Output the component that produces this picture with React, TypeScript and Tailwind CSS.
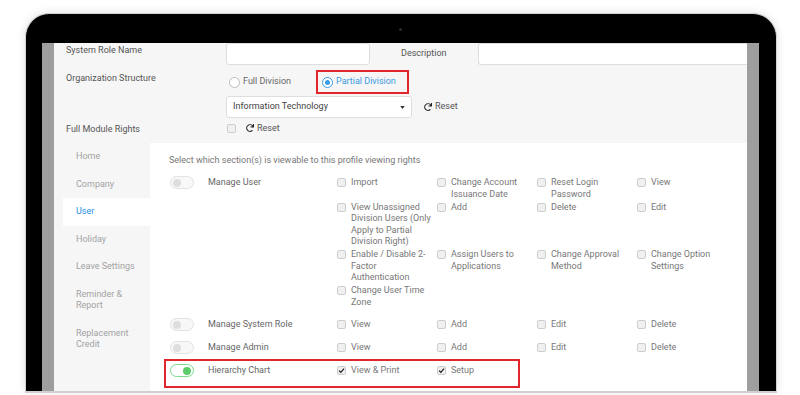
import { FaRedo } from 'react-icons/fa';

type Perm = { label: string; checked?: boolean };

interface ModuleRow {
    name: string;
    on?: boolean;
    perms: Perm[][];
    highlight?: boolean;
}

const modules: ModuleRow[] = [
    {
        name: 'Manage User',
        perms: [
            [{ label: 'Import' }, { label: 'Change Account Issuance Date' }, { label: 'Reset Login Password' }, { label: 'View' }],
            [{ label: 'View Unassigned Division Users (Only Apply to Partial Division Right)' }, { label: 'Add' }, { label: 'Delete' }, { label: 'Edit' }],
            [{ label: 'Enable / Disable 2-Factor Authentication' }, { label: 'Assign Users to Applications' }, { label: 'Change Approval Method' }, { label: 'Change Option Settings' }],
            [{ label: 'Change User Time Zone' }],
        ],
    },
    {
        name: 'Manage System Role',
        perms: [[{ label: 'View' }, { label: 'Add' }, { label: 'Edit' }, { label: 'Delete' }]],
    },
    {
        name: 'Manage Admin',
        perms: [[{ label: 'View' }, { label: 'Add' }, { label: 'Edit' }, { label: 'Delete' }]],
    },
    {
        name: 'Hierarchy Chart',
        on: true,
        highlight: true,
        perms: [[{ label: 'View & Print', checked: true }, { label: 'Setup', checked: true }]],
    },
];

const menu = [
    { label: 'Home' },
    { label: 'Company' },
    { label: 'User', active: true },
    { label: 'Holiday' },
    { label: 'Leave Settings' },
    { label: 'Reminder & Report' },
    { label: 'Replacement Credit' },
];

function Checkbox({ checked }: { checked?: boolean }) {
    return (
        <span className="mt-[1px] flex h-[9px] w-[9px] shrink-0 items-center justify-center rounded-[2px] border border-[#cdcdcd] bg-[#f0f0f0]">
            {checked && (
                <svg viewBox="0 0 10 10" className="h-[7px] w-[7px]">
                    <path d="M1.5 5.2 L4 7.6 L8.6 2.2" fill="none" stroke="#222" strokeWidth={1.8} />
                </svg>
            )}
        </span>
    );
}

function Toggle({ on }: { on?: boolean }) {
    return (
        <span
            className={
                on
                    ? 'flex h-[13px] w-[24px] items-center justify-end rounded-full border border-[#7fd98c] bg-white px-[2px]'
                    : 'flex h-[13px] w-[24px] items-center justify-start rounded-full border border-[#e2e2e2] bg-[#f8f8f8] px-[2px]'
            }
        >
            <span className={on ? 'h-[8px] w-[8px] rounded-full bg-[#5ccb6c]' : 'h-[8px] w-[8px] rounded-full bg-[#dedede]'} />
        </span>
    );
}

function ResetLink() {
    return (
        <span className="flex items-center gap-[3px] text-[9px] leading-[11.5px] text-[#555]">
            <FaRedo className="h-[8px] w-[8px] text-[#222]" />
            Reset
        </span>
    );
}

export default function App() {
    return (
        <div className="h-[395px] w-[800px] overflow-hidden bg-white pl-[25px] pt-[13px] font-['Roboto',sans-serif]">
            <div className="flex h-[378px] w-[752px] flex-col rounded-t-[24px] border border-b-0 border-[#d2d2d2] bg-black pl-[16px] pr-[17px] shadow-[0_0_10px_rgba(0,0,0,0.12)]">
                {/* camera */}
                <div className="flex h-[29px] shrink-0 items-center justify-center">
                    <span className="mt-[1px] h-[3px] w-[3px] rounded-full bg-[#2c2c2c]" />
                </div>

                <div className="flex min-h-0 flex-1">
                    <div className="w-[12px] bg-[#9e9e9e]" />

                    <div className="flex w-[693px] flex-col bg-[#f6f6f6]">
                        {/* top form */}
                        <div className="h-[100px] shrink-0 text-[9px] leading-[11.5px] text-[#555]">
                            <div className="flex h-[22px]">
                                <div className="w-[172px] pl-[12px] pt-[2px]">System Role Name</div>
                                <div className="h-[22px] w-[144px] rounded-[3px] border border-[#dedede] bg-white" />
                                <div className="ml-[31px] w-[77px] self-center">Description</div>
                                <div className="h-[22px] flex-1 rounded-l-[3px] border border-r-0 border-[#dedede] bg-white" />
                            </div>

                            <div className="mt-[5px] flex h-[24px]">
                                <div className="w-[172px] pl-[12px] pt-[3px]">Organization Structure</div>
                                <div className="flex w-[90px] items-center gap-[3px] pl-[3px] text-[#666]">
                                    <span className="h-[11px] w-[11px] rounded-full border border-[#bdbdbd] bg-white" />
                                    Full Division
                                </div>
                                <div className="flex w-[93px] items-center gap-[3px] border-2 border-[#e3262b] pl-[4px] text-[#3a9be6]">
                                    <span className="flex h-[11px] w-[11px] items-center justify-center rounded-full border border-[#3a9be6] bg-white">
                                        <span className="h-[5px] w-[5px] rounded-full bg-[#3a9be6]" />
                                    </span>
                                    Partial Division
                                </div>
                            </div>

                            <div className="mt-[2px] flex h-[22px]">
                                <div className="w-[172px]" />
                                <div className="flex h-[22px] w-[186px] items-center justify-between rounded-[3px] border border-[#dedede] bg-white pl-[6px] pr-[6px] text-[#444]">
                                    Information Technology
                                    <svg viewBox="0 0 6 4" className="h-[3px] w-[5px]">
                                        <path d="M0 0 L6 0 L3 4 Z" fill="#333" />
                                    </svg>
                                </div>
                                <div className="ml-[12px] flex items-center">
                                    <ResetLink />
                                </div>
                            </div>

                            <div className="mt-[6px] flex">
                                <div className="w-[172px] pl-[12px]">Full Module Rights</div>
                                <div className="ml-[1px] mt-[-3px] flex items-center gap-[10px]">
                                    <Checkbox />
                                    <ResetLink />
                                </div>
                            </div>
                        </div>

                        {/* permissions */}
                        <div className="flex min-h-0 flex-1">
                            <div className="w-[96px] shrink-0 pl-[9px] text-[9px] leading-[11.5px] text-[#a3a3a3]">
                                {menu.map((m) => (
                                    <div
                                        key={m.label}
                                        className={m.active ? 'bg-white py-[8px] pl-[13px] pr-[6px] text-[#2d8fe0]' : 'py-[8px] pl-[13px] pr-[6px]'}
                                    >
                                        {m.label}
                                    </div>
                                ))}
                            </div>

                            <div className="flex-1 bg-white pl-[19px] pt-[12px] text-[9px] leading-[11.5px] text-[#777]">
                                <div>Select which section(s) is viewable to this profile viewing rights</div>

                                <div className="mt-[5px]">
                                    {modules.map((mod) => (
                                        <div key={mod.name} className="relative flex items-start py-[5.5px]">
                                            {mod.highlight && (
                                                <div className="absolute left-[-5px] top-[-1px] h-[29px] w-[356px] border-2 border-[#e3262b]" />
                                            )}
                                            <div className="w-[39px] pl-[1px]">
                                                <div className="mt-[-1px]">
                                                    <Toggle on={mod.on} />
                                                </div>
                                            </div>
                                            <div className="w-[129px] text-[#666]">{mod.name}</div>
                                            <div className="flex flex-col gap-y-[1.5px]">
                                                {mod.perms.map((row, ri) => (
                                                    <div key={ri} className="flex">
                                                        {row.map((p) => (
                                                            <div key={p.label} className="flex w-[100px] gap-[5px]">
                                                                <Checkbox checked={p.checked} />
                                                                <span className="w-[84px]">{p.label}</span>
                                                            </div>
                                                        ))}
                                                    </div>
                                                ))}
                                            </div>
                                        </div>
                                    ))}
                                </div>
                            </div>
                        </div>
                    </div>

                    <div className="w-[12px] bg-[#9e9e9e]" />
                </div>
            </div>
            <div className="h-[2px] w-[752px] bg-[#d0d0d0]" />
        </div>
    );
}
